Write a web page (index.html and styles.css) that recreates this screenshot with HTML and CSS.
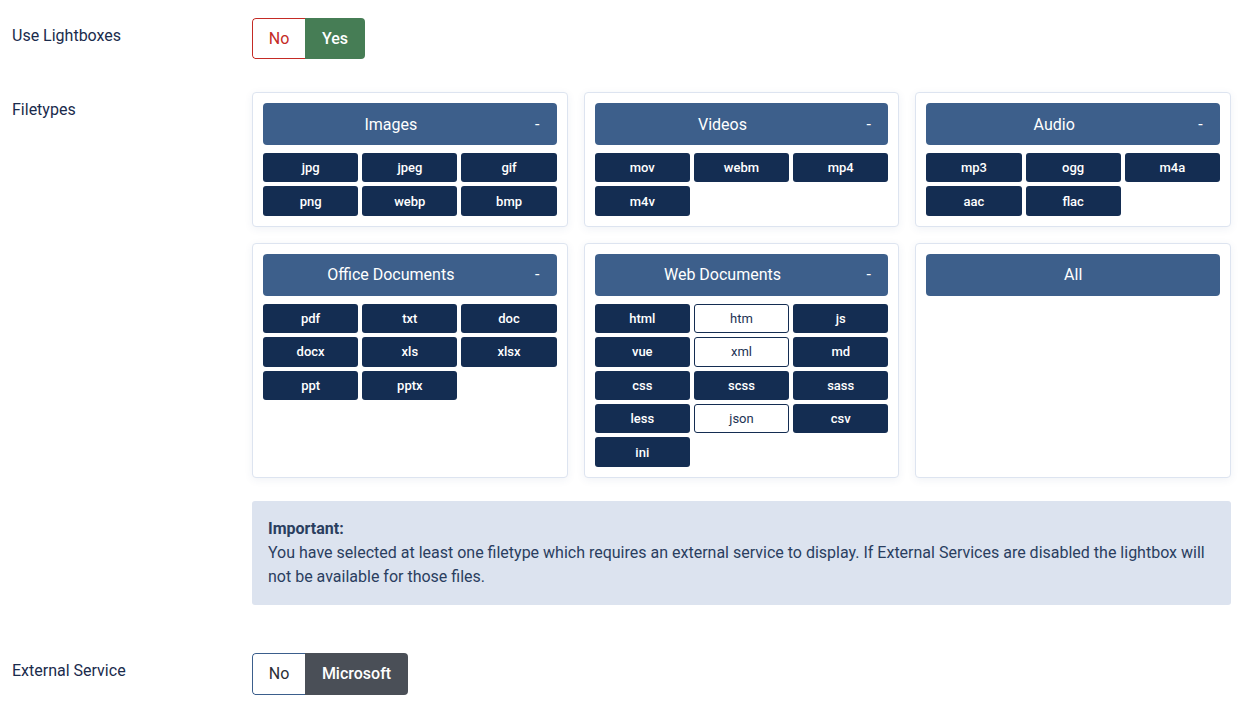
FILE: index.html
```html
<!DOCTYPE html>
<html>
<head>
<meta charset="utf-8">
<link rel="stylesheet" href="styles.css">
</head>
<body>
<div class="form">
  <div class="row row-lightbox">
    <div class="label">Use Lightboxes</div>
    <div class="control">
      <div class="toggle">
        <span class="opt opt-no-red">No</span>
        <span class="opt opt-yes">Yes</span>
      </div>
    </div>
  </div>

  <div class="row row-filetypes">
    <div class="label">Filetypes</div>
    <div class="control">
      <div class="cards">
        <div class="card">
          <div class="card-head"><span class="title">Images</span><span class="minus">-</span></div>
          <div class="types">
            <span class="type">jpg</span><span class="type">jpeg</span><span class="type">gif</span>
            <span class="type">png</span><span class="type">webp</span><span class="type">bmp</span>
          </div>
        </div>
        <div class="card">
          <div class="card-head"><span class="title">Videos</span><span class="minus">-</span></div>
          <div class="types">
            <span class="type">mov</span><span class="type">webm</span><span class="type">mp4</span>
            <span class="type">m4v</span>
          </div>
        </div>
        <div class="card">
          <div class="card-head"><span class="title">Audio</span><span class="minus">-</span></div>
          <div class="types">
            <span class="type">mp3</span><span class="type">ogg</span><span class="type">m4a</span>
            <span class="type">aac</span><span class="type">flac</span>
          </div>
        </div>
        <div class="card">
          <div class="card-head"><span class="title">Office Documents</span><span class="minus">-</span></div>
          <div class="types">
            <span class="type">pdf</span><span class="type">txt</span><span class="type">doc</span>
            <span class="type">docx</span><span class="type">xls</span><span class="type">xlsx</span>
            <span class="type">ppt</span><span class="type">pptx</span>
          </div>
        </div>
        <div class="card">
          <div class="card-head"><span class="title">Web Documents</span><span class="minus">-</span></div>
          <div class="types">
            <span class="type">html</span><span class="type off">htm</span><span class="type">js</span>
            <span class="type">vue</span><span class="type off">xml</span><span class="type">md</span>
            <span class="type">css</span><span class="type">scss</span><span class="type">sass</span>
            <span class="type">less</span><span class="type off">json</span><span class="type">csv</span>
            <span class="type">ini</span>
          </div>
        </div>
        <div class="card">
          <div class="card-head"><span class="title">All</span></div>
        </div>
      </div>
      <div class="alert">
        <strong>Important:</strong><br>
        You have selected at least one filetype which requires an external service to display. If External Services are disabled the lightbox will not be available for those files.
      </div>
    </div>
  </div>

  <div class="row row-external">
    <div class="label">External Service</div>
    <div class="control">
      <div class="toggle toggle-ext">
        <span class="opt opt-no-plain">No</span>
        <span class="opt opt-ms">Microsoft</span>
      </div>
    </div>
  </div>
</div>
</body>
</html>
```

FILE: styles.css
```css
html, body {
  margin: 0;
  padding: 0;
  background: #fff;
}
body {
  font-family: Roboto, "Liberation Sans", Arial, sans-serif;
  color: #1b2a4b;
}
.form {
  padding: 18px 16px 0 12px;
}
.row {
  display: flex;
  align-items: flex-start;
}
.label {
  width: 240px;
  flex: none;
  font-size: 16px;
  line-height: 24px;
  padding-top: 6px;
  color: #1a2b4c;
}
.control {
  flex: 1;
  min-width: 0;
}
.row-lightbox { margin-bottom: 33px; }
.row-filetypes { margin-bottom: 48px; }

.toggle {
  display: inline-flex;
  height: 41px;
  border-radius: 4px;
  overflow: hidden;
  font-size: 16px;
}
.opt {
  display: flex;
  align-items: center;
  justify-content: center;
  box-sizing: border-box;
}
.opt-no-red {
  width: 53px;
  color: #c42b25;
  border: 1px solid #c42b25;
  border-right: none;
  border-radius: 4px 0 0 4px;
  background: #fff;
}
.opt-yes {
  width: 60px;
  background: #467d55;
  color: #fff;
  font-weight: 500;
}
.toggle-ext { height: 42px; }
.opt-no-plain {
  width: 53px;
  color: #2b2f36;
  border: 1px solid #3b5e8c;
  border-right: none;
  border-radius: 4px 0 0 4px;
  background: #fff;
}
.opt-ms {
  width: 103px;
  background: #4a4f57;
  color: #fff;
  font-weight: 500;
}

.cards {
  display: grid;
  grid-template-columns: repeat(3, 1fr);
  gap: 16px;
}
.card {
  border: 1px solid #dde4f0;
  border-radius: 4px;
  padding: 10px 10px 10px;
  box-shadow: 0 2px 8px rgba(40, 70, 130, 0.07);
  background: #fff;
}
.card-head {
  height: 42px;
  background: #3d5f8b;
  color: #fff;
  border-radius: 4px;
  font-size: 16px;
  display: flex;
  align-items: center;
}
.title {
  flex: 1;
  text-align: center;
}
.minus {
  flex: none;
  width: 37px;
  text-align: center;
  padding-right: 1px;
}
.types {
  display: grid;
  grid-template-columns: repeat(3, 1fr);
  gap: 4px;
  margin-top: 8px;
}
.type {
  height: 29.4px;
  box-sizing: border-box;
  background: #142d52;
  color: #fff;
  border-radius: 3px;
  font-size: 13px;
  font-weight: 500;
  display: flex;
  align-items: center;
  justify-content: center;
}
.type.off {
  background: #fff;
  color: #1d3354;
  border: 1px solid #142d52;
  font-weight: 400;
}

.alert {
  margin-top: 23px;
  background: #dce3ef;
  border-radius: 3px;
  padding: 16px 16px;
  font-size: 16px;
  line-height: 24px;
  color: #2a3e5f;
}
.alert strong {
  font-weight: 700;
}
```
